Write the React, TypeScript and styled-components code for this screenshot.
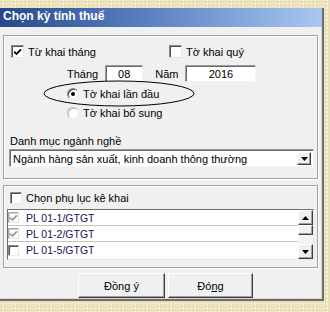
import * as React from "react";
import styled, { createGlobalStyle } from "styled-components";

const GlobalStyle = createGlobalStyle`
  html, body {
    margin: 0;
    padding: 0;
  }
  body {
    width: 330px;
    height: 312px;
    overflow: hidden;
    background-color: #ece4bf;
    background-image: radial-gradient(#ddd09c 0.8px, transparent 1px),
      radial-gradient(#f7f1d8 0.8px, transparent 1px);
    background-size: 3px 3px, 4px 4px;
    background-position: 0 0, 1px 2px;
    font-family: "Liberation Sans", Arial, sans-serif;
    font-size: 11px;
    color: #000;
  }
`;

const Desktop = styled.div`
  padding-top: 8px;
`;

const Window = styled.div`
  position: relative;
  width: 324px;
  height: 293px;
  box-sizing: border-box;
  background: #f0f0f0;
  border-right: 2px solid #6f6f6f;
  border-bottom: 2px solid #6f6f6f;
  box-shadow: inset -1px -1px 0 #d6d6d6;
  display: flex;
  flex-direction: column;
`;

const TitleBar = styled.div`
  height: 19px;
  padding-left: 3px;
  background: linear-gradient(to right, #26498a 0%, #5a7fc0 45%, #a9c7f1 100%);
  color: #fff;
  font-weight: bold;
  font-size: 12px;
  line-height: 17px;
`;

const Body = styled.div`
  padding: 8px 0 0 3px;
  display: flex;
  flex-direction: column;
`;

const GroupBox = styled.div<{ $height: number; $top?: number }>`
  position: relative;
  width: 315px;
  height: ${(p) => p.$height}px;
  margin-top: ${(p) => p.$top ?? 0}px;
  box-sizing: border-box;
  border: 1px solid #a0a0a0;
  box-shadow: 1px 1px 0 #fff, inset 1px 1px 0 #fff;
  display: flex;
  flex-direction: column;
`;

const Row = styled.div<{ $top: number; $left: number; $height?: number }>`
  display: flex;
  align-items: center;
  margin-top: ${(p) => p.$top}px;
  padding-left: ${(p) => p.$left}px;
  height: ${(p) => p.$height ?? 13}px;
`;

const CheckItem = styled.label<{ $width?: number }>`
  display: flex;
  align-items: center;
  gap: 4px;
  width: ${(p) => (p.$width ? `${p.$width}px` : "auto")};
`;

const Box = styled.span<{ $disabled?: boolean; $size?: number }>`
  width: ${(p) => p.$size ?? 13}px;
  height: ${(p) => p.$size ?? 13}px;
  box-sizing: border-box;
  flex: none;
  background: #fff;
  border: 1px solid;
  border-color: ${(p) =>
    p.$disabled ? "#a8a8a8 #e4e4e4 #e4e4e4 #a8a8a8" : "#8a8a8a #e8e8e8 #e8e8e8 #8a8a8a"};
  box-shadow: inset 1px 1px 0 ${(p) => (p.$disabled ? "#cfcfcf" : "#505050")};
  display: flex;
  align-items: center;
  justify-content: center;
`;

const CheckBox = ({
  checked,
  disabled,
  size,
}: {
  checked?: boolean;
  disabled?: boolean;
  size?: number;
}) => (
  <Box $disabled={disabled} $size={size}>
    {checked && (
      <svg width="9" height="8" viewBox="0 0 9 8">
        <polyline
          points="1.2,3.6 3.5,6 8,1.4"
          fill="none"
          stroke={disabled ? "#9a9a9a" : "#000"}
          strokeWidth="1.8"
        />
      </svg>
    )}
  </Box>
);

const RadioCircle = styled.span<{ $faded?: boolean }>`
  width: 12px;
  height: 12px;
  box-sizing: border-box;
  flex: none;
  border-radius: 50%;
  background: #fff;
  border: 1px solid;
  border-color: ${(p) =>
    p.$faded ? "#b4b4b4 #ececec #ececec #b4b4b4" : "#808080 #e8e8e8 #e8e8e8 #808080"};
  box-shadow: inset 1px 1px 0 ${(p) => (p.$faded ? "#d0d0d0" : "#4a4a4a")};
  display: flex;
  align-items: center;
  justify-content: center;
`;

const Dot = styled.span`
  width: 4px;
  height: 4px;
  border-radius: 50%;
  background: #000;
`;

const RadioItem = styled.label`
  display: flex;
  align-items: center;
  gap: 4px;
`;

const Label = styled.span<{ $gap?: number; $before?: number }>`
  margin-right: ${(p) => p.$gap ?? 0}px;
  margin-left: ${(p) => p.$before ?? 0}px;
  white-space: nowrap;
`;

const Field = styled.div<{ $width: number }>`
  width: ${(p) => p.$width}px;
  height: 17px;
  box-sizing: border-box;
  background: #fff;
  border: 1px solid;
  border-color: #9a9a9a #f4f4f4 #f4f4f4 #9a9a9a;
  box-shadow: inset 1px 1px 0 #6a6a6a;
  display: flex;
  align-items: center;
  justify-content: center;
  padding-top: 1px;
`;

const Select = styled.div`
  margin-left: 5px;
  width: 305px;
  height: 18px;
  box-sizing: border-box;
  background: #fff;
  border: 1px solid;
  border-color: #9a9a9a #f4f4f4 #f4f4f4 #9a9a9a;
  box-shadow: inset 1px 1px 0 #6a6a6a;
  display: flex;
  align-items: center;
  padding: 2px 2px 1px 3px;
  margin-top: 2px;
`;

const SelectText = styled.span`
  flex: 1;
  white-space: nowrap;
  overflow: hidden;
`;

const ArrowButton = styled.div<{ $w?: number; $h?: number }>`
  width: ${(p) => p.$w ?? 15}px;
  height: ${(p) => p.$h ?? 15}px;
  box-sizing: border-box;
  flex: none;
  background: #f0f0f0;
  border: 1px solid;
  border-color: #fff #404040 #404040 #fff;
  box-shadow: inset -1px -1px 0 #a0a0a0;
  display: flex;
  align-items: center;
  justify-content: center;
`;

const Arrow = ({ up }: { up?: boolean }) => (
  <svg width="7" height="4" viewBox="0 0 7 4">
    <polygon points={up ? "3.5,0 7,4 0,4" : "0,0 7,0 3.5,4"} fill="#000" />
  </svg>
);

const ListBox = styled.div`
  margin: 5px 0 0 3px;
  width: 307px;
  height: 51px;
  box-sizing: border-box;
  background: #fff;
  border: 1px solid;
  border-color: #6e6e6e #e8e8e8 #e8e8e8 #6e6e6e;
  display: flex;
`;

const ListRows = styled.div`
  flex: 1;
  display: flex;
  flex-direction: column;
`;

const ListRow = styled.div<{ $last?: boolean }>`
  height: 16px;
  box-sizing: border-box;
  border-bottom: ${(p) => (p.$last ? "none" : "1px solid #c4c4c4")};
  display: flex;
  align-items: center;
  gap: 7px;
  color: #121250;
  font-size: 10.5px;
`;

const ScrollBar = styled.div`
  width: 15px;
  display: flex;
  flex-direction: column;
`;

const Track = styled.div`
  flex: 1;
  background: repeating-conic-gradient(#e6e6e6 0 25%, #fff 0 50%) 0 0 / 2px 2px;
`;

const Buttons = styled.div`
  margin-top: 5px;
  padding-left: 75px;
  display: flex;
  gap: 3px;
`;

const Button = styled.div<{ $width: number }>`
  width: ${(p) => p.$width}px;
  height: 25px;
  box-sizing: border-box;
  background: #f0f0f0;
  border: 1px solid;
  border-color: #fff #3c3c3c #3c3c3c #fff;
  box-shadow: inset -1px -1px 0 #a0a0a0;
  display: flex;
  align-items: center;
  justify-content: center;
`;

const Ellipse = styled.svg`
  position: absolute;
  left: 39px;
  top: 44px;
  pointer-events: none;
`;

const appendices = ["PL 01-1/GTGT", "PL 01-2/GTGT", "PL 01-5/GTGT"];

const App = () => (
  <Desktop>
    <GlobalStyle />
    <Window>
      <TitleBar>Chọn kỳ tính thuế</TitleBar>
      <Body>
        <GroupBox $height={144}>
          <Row $top={9} $left={7}>
            <CheckItem $width={158}>
              <CheckBox checked />
              <span>Từ khai tháng</span>
            </CheckItem>
            <CheckItem>
              <CheckBox />
              <span>Tờ khai quý</span>
            </CheckItem>
          </Row>
          <Row $top={7} $left={63} $height={17}>
            <Label $gap={7}>Tháng</Label>
            <Field $width={38}>08</Field>
            <Label $before={12} $gap={7}>
              Năm
            </Label>
            <Field $width={71}>2016</Field>
          </Row>
          <Row $top={5} $left={63}>
            <RadioItem>
              <RadioCircle>
                <Dot />
              </RadioCircle>
              <span>Tờ khai lần đầu</span>
            </RadioItem>
          </Row>
          <Row $top={6} $left={63}>
            <RadioItem>
              <RadioCircle $faded />
              <span>Tờ khai bổ sung</span>
            </RadioItem>
          </Row>
          <Row $top={15} $left={6}>
            <Label>Danh mục ngành nghề</Label>
          </Row>
          <Select>
            <SelectText>Ngành hàng sản xuất, kinh doanh thông thường</SelectText>
            <ArrowButton $w={14} $h={13}>
              <Arrow />
            </ArrowButton>
          </Select>
          <Ellipse width="152" height="27" viewBox="0 0 152 27">
            <ellipse cx="76" cy="13.5" rx="75" ry="12.5" fill="none" stroke="#000" strokeWidth="1" />
          </Ellipse>
        </GroupBox>

        <GroupBox $height={83} $top={6}>
          <Row $top={5} $left={6}>
            <CheckItem>
              <CheckBox size={12} />
              <span>Chọn phụ lục kê khai</span>
            </CheckItem>
          </Row>
          <ListBox>
            <ListRows>
              {appendices.map((name, i) => (
                <ListRow key={name} $last={i === appendices.length - 1}>
                  <CheckBox checked={i < 2} disabled={i < 2} size={11} />
                  <span>{name}</span>
                </ListRow>
              ))}
            </ListRows>
            <ScrollBar>
              <ArrowButton>
                <Arrow up />
              </ArrowButton>
              <ArrowButton $h={10} />
              <Track />
              <ArrowButton>
                <Arrow />
              </ArrowButton>
            </ScrollBar>
          </ListBox>
        </GroupBox>

        <Buttons>
          <Button $width={87}>Đồng ý</Button>
          <Button $width={85}>
            <span>
              Đó<u>ng</u>
            </span>
          </Button>
        </Buttons>
      </Body>
    </Window>
  </Desktop>
);

export default App;
